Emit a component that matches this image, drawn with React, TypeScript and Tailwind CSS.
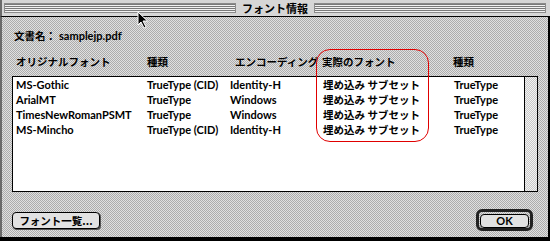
const rows = [
  { name: 'MS-Gothic', type: 'TrueType (CID)', enc: 'Identity-H', actual: '埋め込み サブセット', type2: 'TrueType' },
  { name: 'ArialMT', type: 'TrueType', enc: 'Windows', actual: '埋め込み サブセット', type2: 'TrueType' },
  { name: 'TimesNewRomanPSMT', type: 'TrueType', enc: 'Windows', actual: '埋め込み サブセット', type2: 'TrueType' },
  { name: 'MS-Mincho', type: 'TrueType (CID)', enc: 'Identity-H', actual: '埋め込み サブセット', type2: 'TrueType' },
]

const stripes =
  'h-[10px] flex-1 bg-[repeating-linear-gradient(to_bottom,#7a7a7a_0px,#7a7a7a_1px,#f2f2f2_1px,#f2f2f2_2px)] border border-[#8a8a8a]'

const jp = "font-['Noto_Sans_CJK_JP',sans-serif] text-[10.5px]"

function Cursor() {
  return (
    <svg className="absolute left-[137px] top-[11px]" width="12" height="18" viewBox="0 0 12 18">
      <path d="M1 1 L1 14 L4 11 L7 17 L9 16 L6 10 L10.5 10 Z" fill="#000" stroke="#fff" strokeWidth="1" />
    </svg>
  )
}

export default function App() {
  return (
    <div className="relative w-[550px] h-[241px] overflow-hidden bg-black font-['Lato','Noto_Sans_CJK_JP',sans-serif] text-[11px] font-bold text-black">
      {/* title bar */}
      <div className="h-[17px] bg-[#d6d6d6] border-l-2 border-[#6a6a6a] border-b border-b-black flex items-center gap-[6px] pl-[2px] pr-[4px]">
        <div className={stripes} />
        <div className="leading-[14px] text-[11px] font-['Noto_Sans_CJK_JP',sans-serif]">フォント情報</div>
        <div className={stripes} />
      </div>

      {/* body */}
      <div className="h-[220px] border-l-2 border-[#6a6a6a] mr-[2px] bg-[#c6c6c6] bg-[conic-gradient(#acacac_25%,#e0e0e0_0_50%,#acacac_0_75%,#e0e0e0_0)] bg-[length:2px_2px] pl-[10px] pr-[11px] pt-[11px]">
        <div className="flex h-[15px] items-center leading-[15px] whitespace-nowrap">
          <span className={`${jp} pl-[2px]`}>文書名：</span>
          <span className="ml-[3px]">samplejp.pdf</span>
        </div>

        <div className={`mt-[12px] flex h-[14px] items-center leading-[14px] whitespace-nowrap ${jp}`}>
          <span className="w-[135px] pl-[4px]">オリジナルフォント</span>
          <span className="w-[88px]">種類</span>
          <span className="w-[87px]">エンコーディング</span>
          <span className="w-[131px]">実際のフォント</span>
          <span>種類</span>
        </div>

        <div className="mt-[7px] flex h-[116px] w-[526px] border border-black bg-white">
          <div className="flex-1">
            {rows.map((r) => (
              <div key={r.name} className="flex h-[15px] items-center leading-[15px] whitespace-nowrap">
                <span className="w-[134px] pl-[3px]">{r.name}</span>
                <span className="w-[83px]">{r.type}</span>
                <span className="w-[93px]">{r.enc}</span>
                <span className={`w-[131px] ${jp}`}>{r.actual}</span>
                <span>{r.type2}</span>
              </div>
            ))}
          </div>
          <div className="w-[13px] border-l border-black bg-[#e0e0e0] bg-[conic-gradient(#c8c8c8_25%,#f2f2f2_0_50%,#c8c8c8_0_75%,#f2f2f2_0)] bg-[length:2px_2px]" />
        </div>

        <div className="mt-[17px] flex h-[22px] items-center justify-between pr-[4px]">
          <button className={`h-[17px] w-[88px] rounded-[4px] border border-black bg-[#e2e2e2] shadow-[1px_1px_0_#555] leading-[15px] font-bold ${jp}`}>
            フォント一覧...
          </button>
          <div className="h-[22px] w-[57px] rounded-[6px] border-[3px] border-[#222] p-[1px]">
            <button className="h-full w-full rounded-[4px] border border-black bg-[#e2e2e2] text-[11px] leading-[12px] font-bold">
              OK
            </button>
          </div>
        </div>
      </div>

      {/* highlight annotation */}
      <div className="absolute left-[316px] top-[49px] h-[93px] w-[113px] rounded-[14px] border border-[#e00000]" />
      <Cursor />
    </div>
  )
}
